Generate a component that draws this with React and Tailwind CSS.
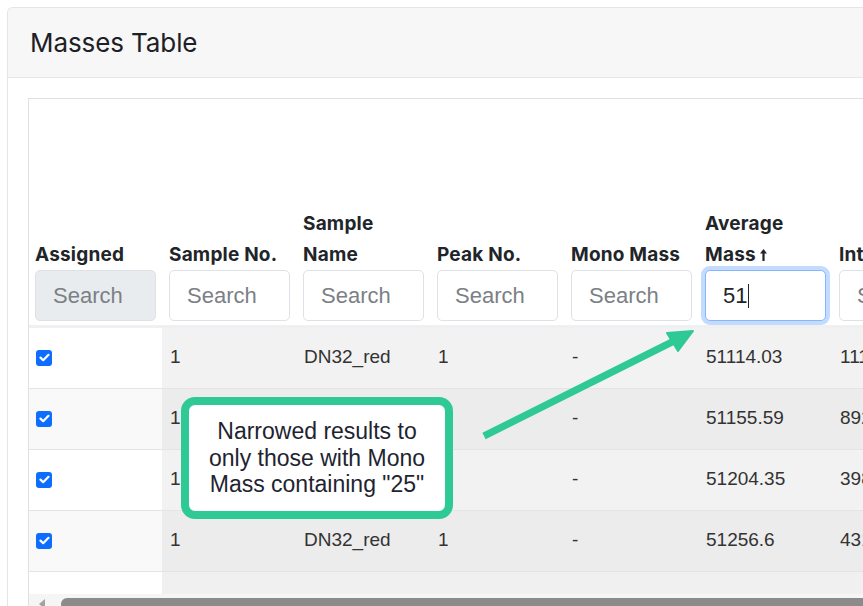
const columns = [
  { label: "Assigned", disabled: true },
  { label: "Sample No." },
  { label: "Sample Name", lines: ["Sample", "Name"] },
  { label: "Peak No." },
  { label: "Mono Mass" },
  { label: "Average Mass", lines: ["Average", "Mass"], sorted: true, value: "51" },
  { label: "Intensity" },
  { label: "Charge" },
];

const rows = [
  ["1", "DN32_red", "1", "-", "51114.03", "111542", "3"],
  ["1", "DN32_red", "1", "-", "51155.59", "89231", "3"],
  ["1", "DN32_red", "1", "-", "51204.35", "39874", "3"],
  ["1", "DN32_red", "1", "-", "51256.6", "43120", "3"],
];

const SortArrow = () => (
  <svg width="9" height="14" viewBox="0 0 9 14" className="ml-[3px] inline-block">
    <path d="M4.5 1 L8 5.5 H5.6 V13 H3.4 V5.5 H1 Z" fill="#212529" />
  </svg>
);

const Check = () => (
  <div className="w-4 h-4 rounded-[3px] bg-[#0d6efd] flex items-center justify-center">
    <svg width="11" height="9" viewBox="0 0 11 9">
      <path d="M1.5 4.6 L4.2 7.2 L9.5 1.8" stroke="white" strokeWidth="2.2" fill="none" strokeLinecap="round" strokeLinejoin="round" />
    </svg>
  </div>
);

const HeaderCell = ({ col }) => (
  <div className="w-[134px] shrink-0 flex flex-col justify-end px-[6px] pb-[4px]">
    <div className="text-[19px] font-bold leading-[31px] text-[#212529] font-['Inter',sans-serif] tracking-[0.2px] whitespace-nowrap">
      {col.lines ? (
        <>
          <div>{col.lines[0]}</div>
          <div className="flex items-center">
            {col.lines[1]}
            {col.sorted && <SortArrow />}
          </div>
        </>
      ) : (
        col.label
      )}
    </div>
    {col.value ? (
      <div className="h-[51px] w-[121px] rounded-[5px] border border-[#86b7fe] shadow-[0_0_0_4px_rgba(13,110,253,0.25)] bg-white flex items-center px-[17px] text-[22px] text-[#212529] font-['Liberation_Sans',sans-serif]">
        {col.value}
        <span className="w-[1px] h-[24px] bg-[#212529] ml-[1px]" />
      </div>
    ) : (
      <div
        className={`h-[51px] w-[121px] rounded-[5px] border border-[#dee2e6] flex items-center px-[17px] text-[22px] text-[#7b8086] font-['Liberation_Sans',sans-serif] ${
          col.disabled ? "bg-[#e9ecef]" : "bg-white"
        }`}
      >
        Search
      </div>
    )}
  </div>
);

export default function App() {
  return (
    <div className="w-[863px] h-[606px] overflow-hidden bg-white relative">
      <div className="ml-[7px] mt-[7px] w-[1100px] h-[620px] border-l border-t border-[#e3e5e7] rounded-tl-[6px] overflow-hidden">
        <div className="h-[70px] bg-[#f7f7f7] border-b border-[#e6e6e6] flex items-center pl-[22px]">
          <h1 className="text-[26px] text-[#1d2125] font-['Inter',sans-serif] tracking-[-0.1px]">Masses Table</h1>
        </div>
        <div className="pt-[20px] pl-[20px]">
          <div className="border-l border-t border-[#e0e0e0]">
            <div className="flex h-[229px] border-b-[3px] border-[#eef0f1] bg-white">
              {columns.map((c) => (
                <HeaderCell key={c.label} col={c} />
              ))}
            </div>
            {rows.map((r, i) => (
              <div key={i} className="flex h-[61px] border-b border-[#e4e4e4]">
                <div className={`w-[133px] shrink-0 flex items-center px-[7px] pb-[1px] ${i % 2 ? "bg-[#f9f9f9]" : "bg-white"}`}>
                  <Check />
                </div>
                <div className={`flex grow items-center pb-[2px] ${i % 2 ? "bg-[#ececec]" : "bg-[#f2f2f2]"}`}>
                  {r.map((v, j) => (
                    <div key={j} className="w-[134px] shrink-0 px-[8px] text-[19px] text-[#333] font-['Liberation_Sans',sans-serif]">
                      {v}
                    </div>
                  ))}
                </div>
              </div>
            ))}
            <div className="flex h-[22px]">
              <div className="w-[133px] shrink-0 bg-white" />
              <div className="grow bg-[#f0f0f0]" />
            </div>
            <div className="h-[16px] bg-[#f5f5f5] flex items-center">
              <svg width="8" height="10" viewBox="0 0 8 10" className="ml-[9px] mt-[4px]">
                <path d="M7 0 L1 5 L7 10 Z" fill="#a3a3a3" />
              </svg>
              <div className="ml-[15px] mt-[4px] h-[12px] grow rounded-full bg-[#8b8b8b]" />
            </div>
          </div>
        </div>
      </div>

      <svg className="absolute left-0 top-0 pointer-events-none" width="863" height="606">
        <line x1="484" y1="436" x2="676" y2="340" stroke="#2ec995" strokeWidth="7" />
        <path d="M693 331 L667 333 L678 351 Z" fill="#2ec995" stroke="#2ec995" strokeWidth="2" strokeLinejoin="round" />
      </svg>

      <div className="absolute left-[181px] top-[397px] w-[272px] h-[122px] rounded-[14px] border-[8px] border-[#2ec995] bg-white flex items-center justify-center">
        <p className="text-center text-[23px] leading-[26.5px] text-[#1e2430] font-['Liberation_Sans',sans-serif] whitespace-nowrap">
          Narrowed results to
          <br />
          only those with Mono
          <br />
          Mass containing "25"
        </p>
      </div>
    </div>
  );
}
